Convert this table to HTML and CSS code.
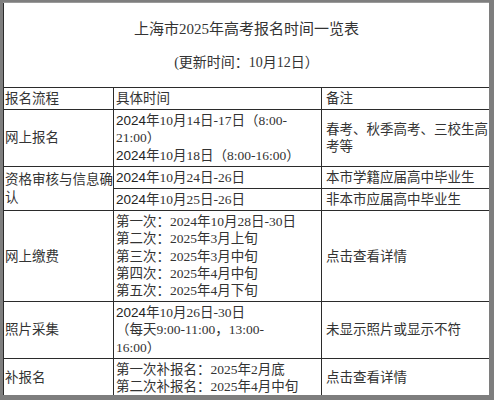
FILE: index.html
```html
<!DOCTYPE html>
<html lang="zh-CN">
<head>
<meta charset="utf-8">
<title>上海市2025年高考报名时间一览表</title>
<link rel="stylesheet" href="styles.css">
</head>
<body>
<div class="frame">
  <table class="sheet">
    <colgroup>
      <col class="c1">
      <col class="c2">
      <col class="c3">
    </colgroup>
    <tr>
      <td class="title-cell" colspan="3">
        <div class="title">上海市2025年高考报名时间一览表</div>
        <div class="subtitle">(更新时间：10月12日）</div>
      </td>
    </tr>
    <tr>
      <td class="step">报名流程</td>
      <td>具体时间</td>
      <td class="note">备注</td>
    </tr>
    <tr>
      <td class="step">网上报名</td>
      <td><span class="sans">2024</span>年10月14日-17日（8:00-<br>21:00）<br><span class="sans">2024</span>年10月18日（8:00-16:00）</td>
      <td class="note">春考、秋季高考、三校生高<br>考等</td>
    </tr>
    <tr>
      <td class="step" rowspan="2">资格审核与信息确<br>认</td>
      <td><span class="sans">2024</span>年10月24日-26日</td>
      <td class="note">本市学籍应届高中毕业生</td>
    </tr>
    <tr>
      <td><span class="sans">2024</span>年10月25日-26日</td>
      <td class="note">非本市应届高中毕业生</td>
    </tr>
    <tr>
      <td class="step">网上缴费</td>
      <td>第一次：2024年10月28日-30日<br>第二次：2025年3月上旬<br>第三次：2025年3月中旬<br>第四次：2025年4月中旬<br>第五次：2025年4月下旬</td>
      <td class="note">点击查看详情</td>
    </tr>
    <tr>
      <td class="step">照片采集</td>
      <td><span class="sans">2024</span>年10月26日-30日<br>（每天9:00-11:00，13:00-<br>16:00）</td>
      <td class="note">未显示照片或显示不符</td>
    </tr>
    <tr>
      <td class="step">补报名</td>
      <td>第一次补报名：2025年2月底<br>第二次补报名：2025年4月中旬</td>
      <td class="note">点击查看详情</td>
    </tr>
  </table>
</div>
</body>
</html>
```
FILE: styles.css
```css
html, body {
  margin: 0;
  padding: 0;
  background: #ffffff;
}

.frame {
  box-sizing: border-box;
  width: 494px;
  height: 400px;
  border-style: solid;
  border-color: #7e7e7e;
  border-width: 2px 5px 5px 3px;
  background: #ffffff;
  overflow: hidden;
}

.sheet {
  width: 486px;
  border-collapse: collapse;
  table-layout: fixed;
  font-family: "Liberation Serif", "Noto Sans CJK SC", serif;
  font-size: 13.5px;
  line-height: 17.2px;
  color: #333333;
}

.c1 { width: 110px; }
.c2 { width: 208px; }
.c3 { width: 168px; }

.sheet td {
  border: 1px solid #2b2b2b;
  padding: 2px 1px 2px 2px;
  vertical-align: middle;
  white-space: nowrap;
  overflow: hidden;
}

.sheet td.step {
  padding-left: 1px;
  padding-right: 0;
}

.sheet td.note {
  padding-left: 4px;
}

.sheet td.title-cell {
  border-top-color: #9a9a9a;
  padding: 16px 0 14px 0;
  text-align: center;
}

.title {
  font-size: 15px;
  line-height: 20px;
}

.subtitle {
  margin-top: 14px;
  font-size: 14px;
  line-height: 20px;
}

.sans {
  font-family: "Liberation Sans", "Noto Sans CJK SC", sans-serif;
  color: #222222;
}
```
